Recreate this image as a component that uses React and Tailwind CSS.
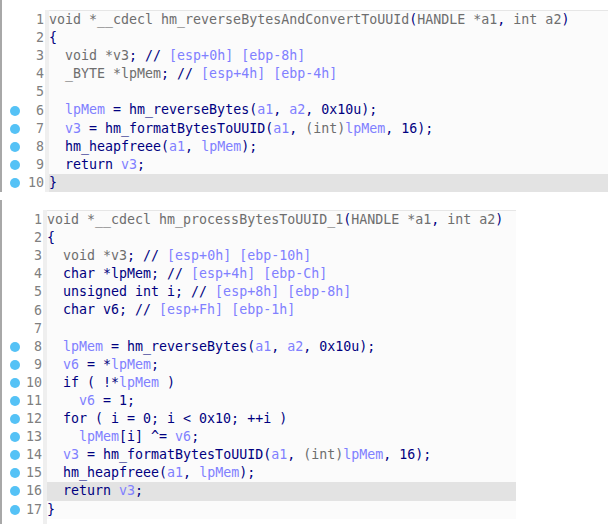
import React from 'react';

const N = 'text-[#000080]';
const G = 'text-[#6e6e6e]';
const L = 'text-[#8080ff]';

const first = [
  { t: [[G, 'void *__cdecl hm_reverseBytesAndConvertToUUId'], [N, '('], [G, 'HANDLE *a1'], [N, ','], [G, ' int a2'], [N, ')']] },
  { t: [[N, '{']] },
  { t: [[G, '  void *v3'], [N, '; //'], [L, ' [esp+0h] [ebp-8h]']] },
  { t: [[G, '  _BYTE *lpMem'], [N, '; //'], [L, ' [esp+4h] [ebp-4h]']] },
  { t: [] },
  { bp: true, t: [[N, '  '], [L, 'lpMem'], [N, ' = hm_reverseBytes('], [L, 'a1'], [N, ', '], [L, 'a2'], [N, ', 0x10u);']] },
  { bp: true, t: [[N, '  '], [L, 'v3'], [N, ' = hm_formatBytesToUUID('], [L, 'a1'], [N, ', '], [G, '(int)'], [L, 'lpMem'], [N, ', 16);']] },
  { bp: true, t: [[N, '  hm_heapfreee('], [L, 'a1'], [N, ', '], [L, 'lpMem'], [N, ');']] },
  { bp: true, t: [[N, '  return '], [L, 'v3'], [N, ';']] },
  { bp: true, hl: true, t: [[N, '}']] },
];

const second = [
  { t: [[G, 'void *__cdecl hm_processBytesToUUID_1'], [N, '('], [G, 'HANDLE *a1'], [N, ','], [G, ' int a2'], [N, ')']] },
  { t: [[N, '{']] },
  { t: [[G, '  void *v3'], [N, '; //'], [L, ' [esp+0h] [ebp-10h]']] },
  { t: [[N, '  char *lpMem; //'], [L, ' [esp+4h] [ebp-Ch]']] },
  { t: [[N, '  unsigned int i; //'], [L, ' [esp+8h] [ebp-8h]']] },
  { t: [[N, '  char v6; //'], [L, ' [esp+Fh] [ebp-1h]']] },
  { t: [] },
  { bp: true, t: [[N, '  '], [L, 'lpMem'], [N, ' = hm_reverseBytes('], [L, 'a1'], [N, ', '], [L, 'a2'], [N, ', 0x10u);']] },
  { bp: true, t: [[N, '  '], [L, 'v6'], [N, ' = *'], [L, 'lpMem'], [N, ';']] },
  { bp: true, t: [[N, '  if ( !*'], [L, 'lpMem'], [N, ' )']] },
  { bp: true, t: [[N, '    '], [L, 'v6'], [N, ' = 1;']] },
  { bp: true, t: [[N, '  for ( i = 0; i < 0x10; ++i )']] },
  { bp: true, t: [[N, '    '], [L, 'lpMem'], [N, '[i] ^= '], [L, 'v6'], [N, ';']] },
  { bp: true, t: [[N, '  '], [L, 'v3'], [N, ' = hm_formatBytesToUUID('], [L, 'a1'], [N, ', '], [G, '(int)'], [L, 'lpMem'], [N, ', 16);']] },
  { bp: true, t: [[N, '  hm_heapfreee('], [L, 'a1'], [N, ', '], [L, 'lpMem'], [N, ');']] },
  { bp: true, hl: true, t: [[N, '  return '], [L, 'v3'], [N, ';']] },
  { bp: true, t: [[N, '}']] },
];

// one pseudocode view: gutter with breakpoints + line numbers, then the code
const Panel = ({ lines, gutter, codeWidth, height }) => (
  <div className="flex border-l-[2px] border-[#a8a8a8]" style={{ height }}>
    <div className={`${gutter} flex flex-col pt-[11px] bg-white`}>
      {lines.map((l, i) => (
        <div key={i} className="h-[18.1px] flex items-center justify-between pl-[8px] pr-[1px]">
          <span className={`w-[10px] h-[10px] rounded-full ${l.bp ? 'bg-[#55c2f6]' : ''}`} />
          <span className="text-[#808080]">{i + 1}</span>
        </div>
      ))}
    </div>
    <div className="flex pt-[10px]">
      <div className="w-[4px] bg-[#efefef]" />
      <div className={`${codeWidth} border-t border-[#e6e6e6] bg-[#fbfbfb] self-start`}>
        {lines.map((l, i) => (
          <div key={i} className={`h-[18.1px] leading-[18.1px] whitespace-pre ${l.hl ? 'bg-[#e3e3e3]' : ''}`}>
            {l.t.map(([c, s], j) => (
              <span key={j} className={c}>{s}</span>
            ))}
          </div>
        ))}
      </div>
    </div>
  </div>
);

const App = () => (
  <div className="w-[615px] h-[524px] bg-white overflow-hidden text-[13.3px] font-['DejaVu_Sans_Mono',monospace]">
    <Panel lines={first} gutter="w-[43px]" codeWidth="w-[559px]" height="192px" />
    <div className="pt-[8px]">
      <Panel lines={second} gutter="w-[41px]" codeWidth="w-[469px]" height="324px" />
    </div>
  </div>
);

export default App;
